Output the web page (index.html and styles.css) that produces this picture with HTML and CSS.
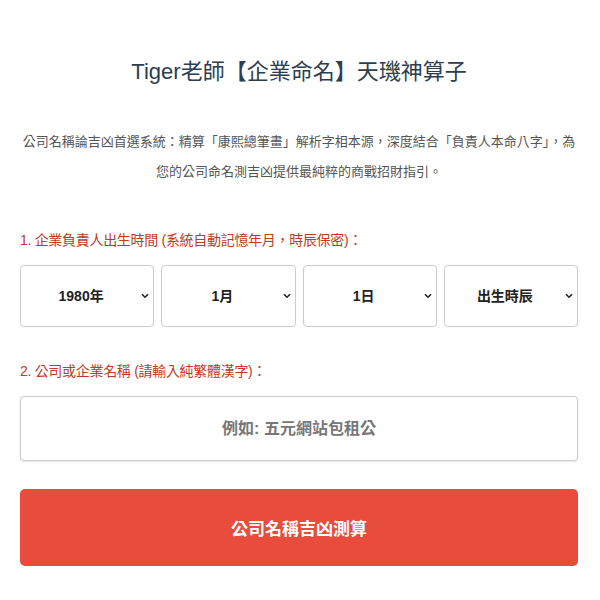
FILE: index.html
```html
<!DOCTYPE html>
<html lang="zh-Hant">
<head>
    <meta charset="UTF-8">
    <meta name="viewport" content="width=device-width, initial-scale=1.0">
    <title>Tiger老師【企業命名】天璣神算子</title>
    <link rel="stylesheet" href="styles.css">
</head>
<body>
    <div class="container">
        <h1>Tiger老師【企業命名】天璣神算子</h1>
        <p class="intro">公司名稱論吉凶首選系統：精算「康熙總筆畫」解析字相本源，深度結合「負責人本命八字」，為您的公司命名測吉凶提供最純粹的商戰招財指引。</p>

        <label class="field-label">1. 企業負責人出生時間 (系統自動記憶年月，時辰保密)：</label>
        <div class="birth-row">
            <select id="birth-year">
                <option>1980年</option>
            </select>
            <select id="birth-month">
                <option>1月</option>
            </select>
            <select id="birth-day">
                <option>1日</option>
            </select>
            <select id="birth-hour">
                <option>出生時辰</option>
            </select>
        </div>

        <label class="field-label" for="company-name">2. 公司或企業名稱 (請輸入純繁體漢字)：</label>
        <input type="text" id="company-name" placeholder="例如: 五元網站包租公">

        <button id="calc-button">公司名稱吉凶測算</button>
    </div>
</body>
</html>
```

FILE: styles.css
```css
body {
    margin: 0;
    font-family: "Liberation Sans", "Noto Sans CJK TC", sans-serif;
    background: #fff;
    color: #333;
}
.container {
    padding: 56px 22px 20px 20px;
}
h1 {
    margin: 0;
    font-size: 22px;
    line-height: 32px;
    font-weight: normal;
    text-align: center;
    color: #2c3e50;
}
.intro {
    margin: 39px 0 43px;
    font-size: 13px;
    line-height: 30px;
    text-align: center;
    color: #555;
}
.field-label {
    display: block;
    font-size: 14px;
    letter-spacing: -0.3px;
    line-height: 20px;
    color: #c0392b;
    margin-bottom: 15px;
}
.birth-row {
    display: grid;
    grid-template-columns: repeat(4, 1fr);
    gap: 7px;
    margin-bottom: 34px;
}
select {
    appearance: none;
    height: 62px;
    border: 1px solid #ccc;
    border-radius: 4px;
    background: #fff url("data:image/svg+xml,%3Csvg xmlns='http://www.w3.org/2000/svg' width='8' height='6' viewBox='0 0 8 6'%3E%3Cpath d='M1 1.2l3 3 3-3' fill='none' stroke='%23222' stroke-width='1.6'/%3E%3C/svg%3E") no-repeat right 4px center;
    padding: 0 16px 0 4px;
    font-family: inherit;
    font-size: 14px;
    font-weight: bold;
    color: #222;
    text-align: center;
    text-align-last: center;
}
input {
    display: block;
    box-sizing: border-box;
    width: 100%;
    height: 65px;
    border: 1px solid #ccc;
    border-radius: 4px;
    box-shadow: 0 1px 2px rgba(0, 0, 0, 0.1);
    font-family: inherit;
    font-size: 16px;
    text-align: center;
    margin-bottom: 28px;
}
input::placeholder {
    color: #777;
    font-weight: bold;
}
button {
    display: block;
    width: 100%;
    height: 77px;
    border: none;
    border-radius: 5px;
    background-color: #e74c3c;
    color: #fff;
    font-family: inherit;
    font-size: 17px;
    font-weight: bold;
    cursor: pointer;
}
```
